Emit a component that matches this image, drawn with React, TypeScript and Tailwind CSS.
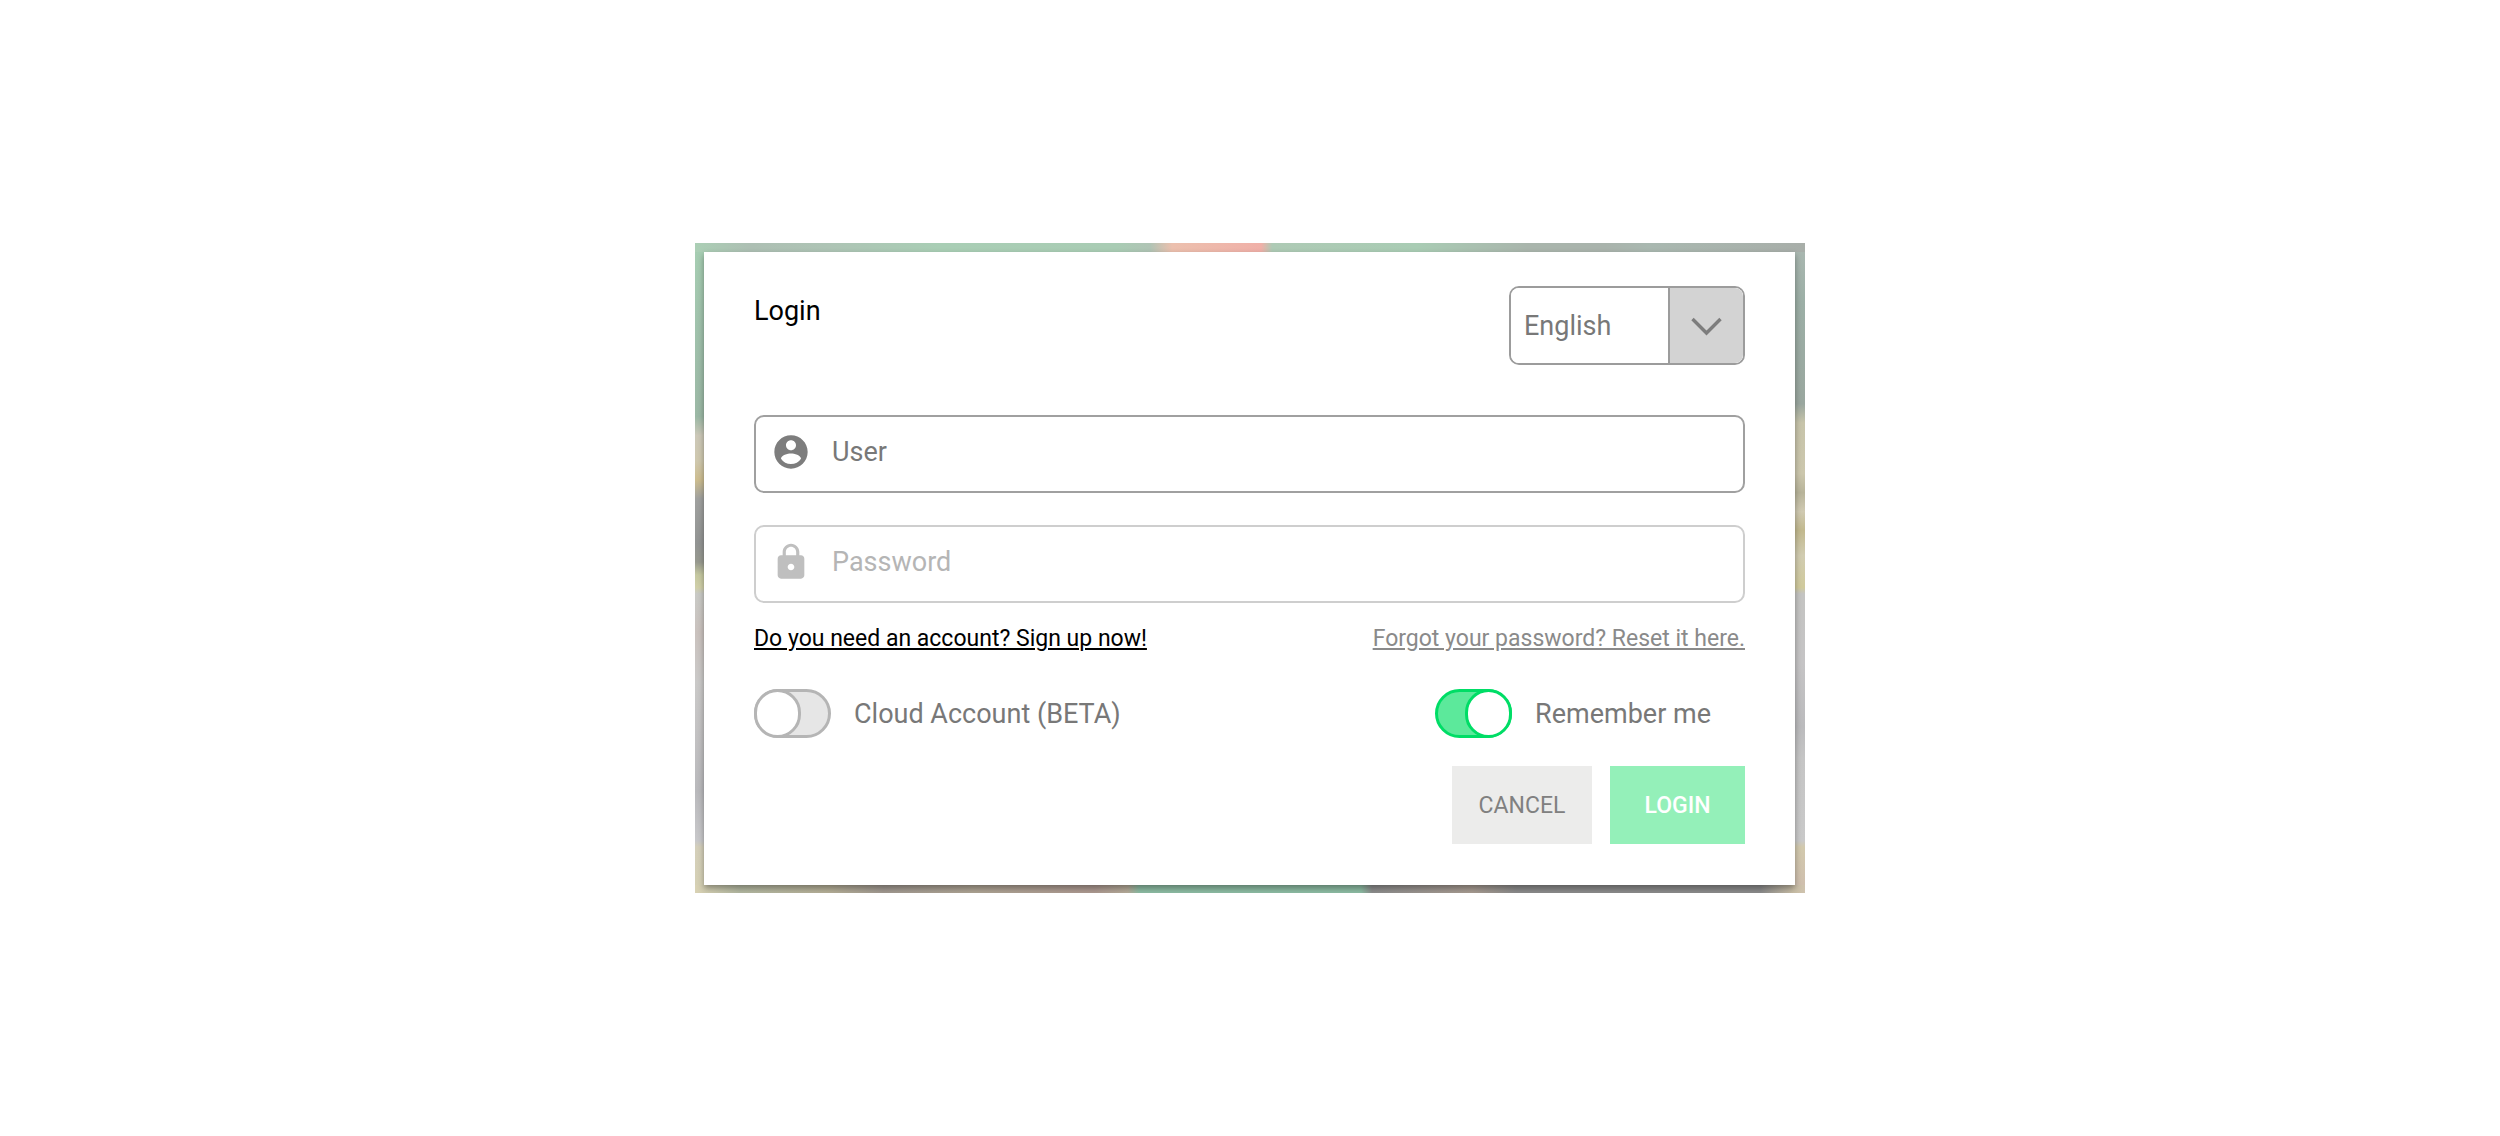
import { useState } from "react";
import type { ReactNode } from "react";

interface FieldProps {
  id: string;
  type: string;
  label: string;
  icon: ReactNode;
  className: string;
  value: string;
  onChange: (value: string) => void;
}

interface ToggleProps {
  label: string;
  checked: boolean;
  onChange: (checked: boolean) => void;
}

// Slices of the blurred backdrop that stay visible around the dialog
const BACKDROP = {
  top: "bg-[linear-gradient(90deg,#abcfb5_0%,#adbfb3_5%,#aec4b5_12%,#a9ceb5_22%,#a9ccb4_38%,#b0c4b5_41%,#ecc0ae_43%,#f0b0a8_51%,#aecab5_52%,#a9ccb4_65%,#a9b5ac_75%,#a9b3ac_82%,#a9b8b0_86%,#a8aea9_100%)]",
  bottom: "bg-[linear-gradient(90deg,#d9d2b4_0%,#b2b7a0_4%,#b4ae96_12%,#a09890_17%,#aca292_25%,#ac9890_36%,#b4aa98_39%,#8cbba2_40%,#8cbba2_60%,#8c8c8c_61%,#a69a90_70%,#8a8a8a_74%,#8a8a8a_96%,#c8bda5_99%,#cfc3ae_100%)]",
  left: "bg-[linear-gradient(180deg,#a6cdb2_0%,#a0c2ac_12%,#9bb8a5_26%,#ccc8b8_29%,#cfc8ae_33%,#cdbd8f_36%,#a0a19f_39%,#929493_46%,#97998f_49%,#c5c8a0_51%,#d0cfa8_53%,#c9cac6_54%,#cac2be_60%,#cac9c8_68%,#c2c1c2_77%,#b9b9bc_85%,#c8c8ca_93%,#d4cfba_94%,#d5d0b4_100%)]",
  right: "bg-[linear-gradient(180deg,#a9b7b0_0%,#9cafa6_8%,#9aa79f_24%,#c7c4aa_27%,#ccc7ad_35%,#b8b49a_38%,#d0cab2_41%,#c2b98e_44%,#d1ccb1_48%,#d0ca9c_53%,#c4c4c2_54%,#c5c4c5_65%,#bbbbbd_75%,#c5c5c5_80%,#c9c9c9_93%,#d2c9ad_94%,#cfbfae_100%)]",
};

function UserIcon() {
  return (
    <svg className="w-10 h-10 shrink-0 text-[#7d7d7d]" viewBox="0 0 24 24" fill="currentColor" aria-hidden="true">
      <path d="M12 2C6.48 2 2 6.48 2 12s4.48 10 10 10 10-4.48 10-10S17.52 2 12 2zm0 3c1.66 0 3 1.34 3 3s-1.34 3-3 3-3-1.34-3-3 1.34-3 3-3zm0 14.2c-2.5 0-4.71-1.28-6-3.22.03-1.99 4-3.08 6-3.08 1.99 0 5.97 1.09 6 3.08-1.29 1.94-3.5 3.22-6 3.22z" />
    </svg>
  );
}

function LockIcon() {
  return (
    <svg className="w-10 h-10 shrink-0 text-[#bfbfbf]" viewBox="0 0 24 24" fill="currentColor" aria-hidden="true">
      <path d="M18 8h-1V6c0-2.76-2.24-5-5-5S7 3.24 7 6v2H6c-1.1 0-2 .9-2 2v10c0 1.1.9 2 2 2h12c1.1 0 2-.9 2-2V10c0-1.1-.9-2-2-2zm-6 9c-1.1 0-2-.9-2-2s.9-2 2-2 2 .9 2 2-.9 2-2 2zm3.1-9H8.9V6c0-1.71 1.39-3.1 3.1-3.1 1.71 0 3.1 1.39 3.1 3.1v2z" />
    </svg>
  );
}

function Field({ id, type, label, icon, className, value, onChange }: FieldProps) {
  return (
    <div className={`flex items-start gap-[21px] rounded-[10px] border-2 px-[15px] h-[78px] pt-[15px] ${className}`}>
      <label htmlFor={id} aria-label={label}>
        {icon}
      </label>
      <input
        id={id}
        type={type}
        value={value}
        onChange={(e) => onChange(e.target.value)}
        placeholder={label}
        className="flex-1 min-w-0 h-10 bg-transparent outline-none placeholder:text-current"
      />
    </div>
  );
}

function Toggle({ label, checked, onChange }: ToggleProps) {
  return (
    <label className="flex items-center gap-[23px] cursor-pointer">
      <input
        type="checkbox"
        role="switch"
        checked={checked}
        onChange={(e) => onChange(e.target.checked)}
        className="peer sr-only"
      />
      <span className="flex w-[77px] h-[49px] rounded-full bg-[#e6e6e6] border-[3px] border-[#b5b5b5] peer-checked:bg-[#5ce99b] peer-checked:border-[#00dd66] peer-checked:justify-end">
        <span
          className={`w-[47px] h-[49px] -m-[3px] rounded-full bg-white border-[3px] ${
            checked ? "border-[#00dd66]" : "border-[#b5b5b5]"
          }`}
        />
      </span>
      <span>{label}</span>
    </label>
  );
}

export default function App() {
  const [user, setUser] = useState("");
  const [password, setPassword] = useState("");
  const [cloud, setCloud] = useState(false);
  const [remember, setRemember] = useState(true);

  return (
    <main className="flex min-h-screen items-center justify-center bg-white font-[Roboto,sans-serif] text-[27px] leading-8 text-[#787878]">
      <div className="w-full max-w-[1110px] overflow-hidden">
        <div className={`h-[9px] ${BACKDROP.top}`} />
        <div className="flex">
          <div className={`w-[9px] ${BACKDROP.left}`} />
          <form
            className="relative flex-1 bg-white px-[50px] pt-[34px] pb-[41px] shadow-[0_3px_6px_rgba(0,0,0,0.35)]"
            onSubmit={(e) => e.preventDefault()}
          >
            {/* Header */}
            <div className="flex items-start justify-between">
              <h1 className="pt-[9px] text-black">Login</h1>
              <div className="relative flex w-[236px] h-[79px] rounded-[10px] border-2 border-[#9c9c9c] overflow-hidden">
                <select className="w-full appearance-none bg-white pl-[13px] outline-none" aria-label="Language" defaultValue="en">
                  <option value="en">English</option>
                  <option value="de">Deutsch</option>
                </select>
                <span className="absolute inset-y-0 right-0 flex w-[75px] items-center justify-center border-l-2 border-[#9c9c9c] bg-[#d3d3d3] pointer-events-none">
                  <svg className="w-8 h-8" viewBox="0 0 32 32" fill="none" stroke="#7d7d7d" strokeWidth={3.4} aria-hidden="true">
                    <path d="M1.5 9L15.5 23 29.5 9" />
                  </svg>
                </span>
              </div>
            </div>

            {/* Credentials */}
            <div className="mt-[50px] flex flex-col gap-8">
              <Field id="user" type="text" label="User" icon={<UserIcon />} className="border-[#a0a0a0]" value={user} onChange={setUser} />
              <Field id="password" type="password" label="Password" icon={<LockIcon />} className="border-[#cecece] text-[#b5b5b5]" value={password} onChange={setPassword} />
            </div>

            <div className="mt-5 flex justify-between text-[23px]">
              <a href="#signup" className="underline text-black">Do you need an account? Sign up now!</a>
              <a href="#reset" className="underline text-[#8a8a8a]">Forgot your password? Reset it here.</a>
            </div>

            <div className="mt-[34px] flex justify-between pr-[34px]">
              <Toggle label="Cloud Account (BETA)" checked={cloud} onChange={setCloud} />
              <Toggle label="Remember me" checked={remember} onChange={setRemember} />
            </div>

            {/* Actions */}
            <div className="mt-7 flex justify-end gap-[18px] text-[23px]">
              <button type="button" className="w-[140px] h-[78px] pt-0.5 bg-[#ececeb] text-[#808080]">CANCEL</button>
              <button type="submit" className="w-[135px] h-[78px] pt-0.5 bg-[#94f0b9] font-medium text-white">LOGIN</button>
            </div>
          </form>
          <div className={`w-[10px] ${BACKDROP.right}`} />
        </div>
        <div className={`h-2 ${BACKDROP.bottom}`} />
      </div>
    </main>
  );
}
